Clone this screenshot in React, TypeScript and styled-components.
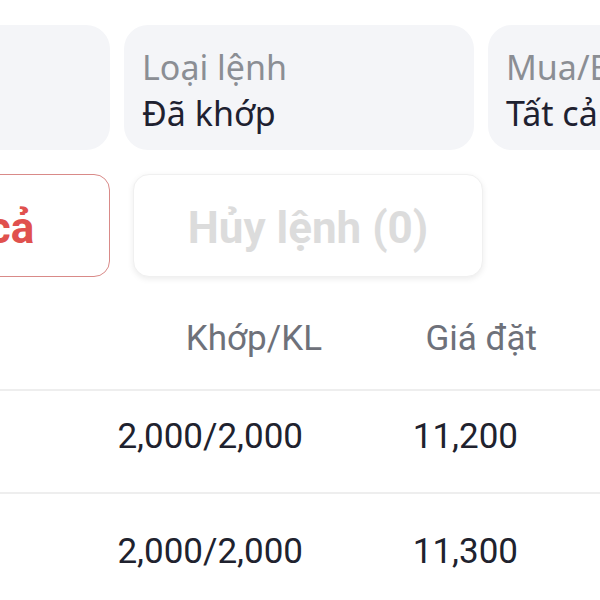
import React from "react";
import styled, { createGlobalStyle } from "styled-components";

const GlobalStyle = createGlobalStyle`
  html, body {
    margin: 0;
    padding: 0;
    background: #ffffff;
    overflow: hidden;
  }
`;

const Page = styled.div`
  width: 600px;
  height: 600px;
  overflow: hidden;
  background: #ffffff;
`;

const FilterRow = styled.div`
  display: flex;
  gap: 14px;
  margin: 25px 0 0 -240px;
`;

const FilterCard = styled.div`
  flex: 0 0 350px;
  height: 125px;
  box-sizing: border-box;
  padding: 19px 18px 0;
  border-radius: 24px;
  background: #f4f5f8;
  font-family: "Noto Sans", "Open Sans", sans-serif;
  white-space: nowrap;
`;

const FilterLabel = styled.div`
  font-size: 34px;
  line-height: 46px;
  color: #8b8e94;
`;

const FilterValue = styled.div`
  font-size: 34px;
  line-height: 46px;
  color: #1e2130;
`;

const ActionRow = styled.div`
  display: flex;
  gap: 23px;
  margin: 24px 0 0 -240px;
`;

const ActionButton = styled.button<{ $active?: boolean }>`
  flex: 0 0 350px;
  height: 103px;
  box-sizing: border-box;
  border-radius: 16px;
  background: #ffffff;
  border: 1.5px solid ${(p) => (p.$active ? "#d98a88" : "#f0f0f0")};
  box-shadow: ${(p) => (p.$active ? "none" : "0 2px 6px rgba(0, 0, 0, 0.08)")};
  font-family: Roboto, "Liberation Sans", sans-serif;
  font-weight: 700;
  font-size: 44px;
  color: ${(p) => (p.$active ? "#e0514e" : "#dcdcdc")};
  white-space: nowrap;
  display: flex;
  align-items: center;
  justify-content: center;
  padding: 4px ${(p) => (p.$active ? "26px" : "0")} 0 0;
`;

const Table = styled.div`
  margin-top: 12px;
  font-family: Roboto, "Liberation Sans", sans-serif;
`;

const Row = styled.div<{ $head?: boolean }>`
  display: grid;
  grid-template-columns: 322px 215px;
  align-items: ${(p) => (p.$head ? "center" : "start")};
  height: ${(p) => (p.$head ? "102px" : "103px")};
  box-sizing: border-box;
  padding-top: ${(p) => (p.$head ? "0" : "26px")};
  border-bottom: 2px solid #eeeeee;

  &:last-child {
    padding-top: 38px;
    height: 120px;
  }
`;

const HeadCell = styled.div`
  justify-self: end;
  font-size: 35px;
  line-height: 40px;
  color: #6e717a;
  white-space: nowrap;
`;

const Cell = styled.div`
  justify-self: end;
  padding-right: 19px;
  font-size: 35px;
  line-height: 40px;
  color: #20222e;
  white-space: nowrap;
`;

const orders = [
  { matched: "2,000/2,000", price: "11,200" },
  { matched: "2,000/2,000", price: "11,300" },
];

const App: React.FC = () => {
  return (
    <Page>
      <GlobalStyle />
      <FilterRow>
        <FilterCard />
        <FilterCard>
          <FilterLabel>Loại lệnh</FilterLabel>
          <FilterValue>Đã khớp</FilterValue>
        </FilterCard>
        <FilterCard>
          <FilterLabel>Mua/Bán</FilterLabel>
          <FilterValue>Tất cả</FilterValue>
        </FilterCard>
      </FilterRow>
      <ActionRow>
        <ActionButton $active>Chọn tất cả</ActionButton>
        <ActionButton>Hủy lệnh (0)</ActionButton>
      </ActionRow>
      <Table>
        <Row $head>
          <HeadCell>Khớp/KL</HeadCell>
          <HeadCell>Giá đặt</HeadCell>
        </Row>
        {orders.map((o, i) => (
          <Row key={i}>
            <Cell>{o.matched}</Cell>
            <Cell>{o.price}</Cell>
          </Row>
        ))}
      </Table>
    </Page>
  );
};

export default App;
